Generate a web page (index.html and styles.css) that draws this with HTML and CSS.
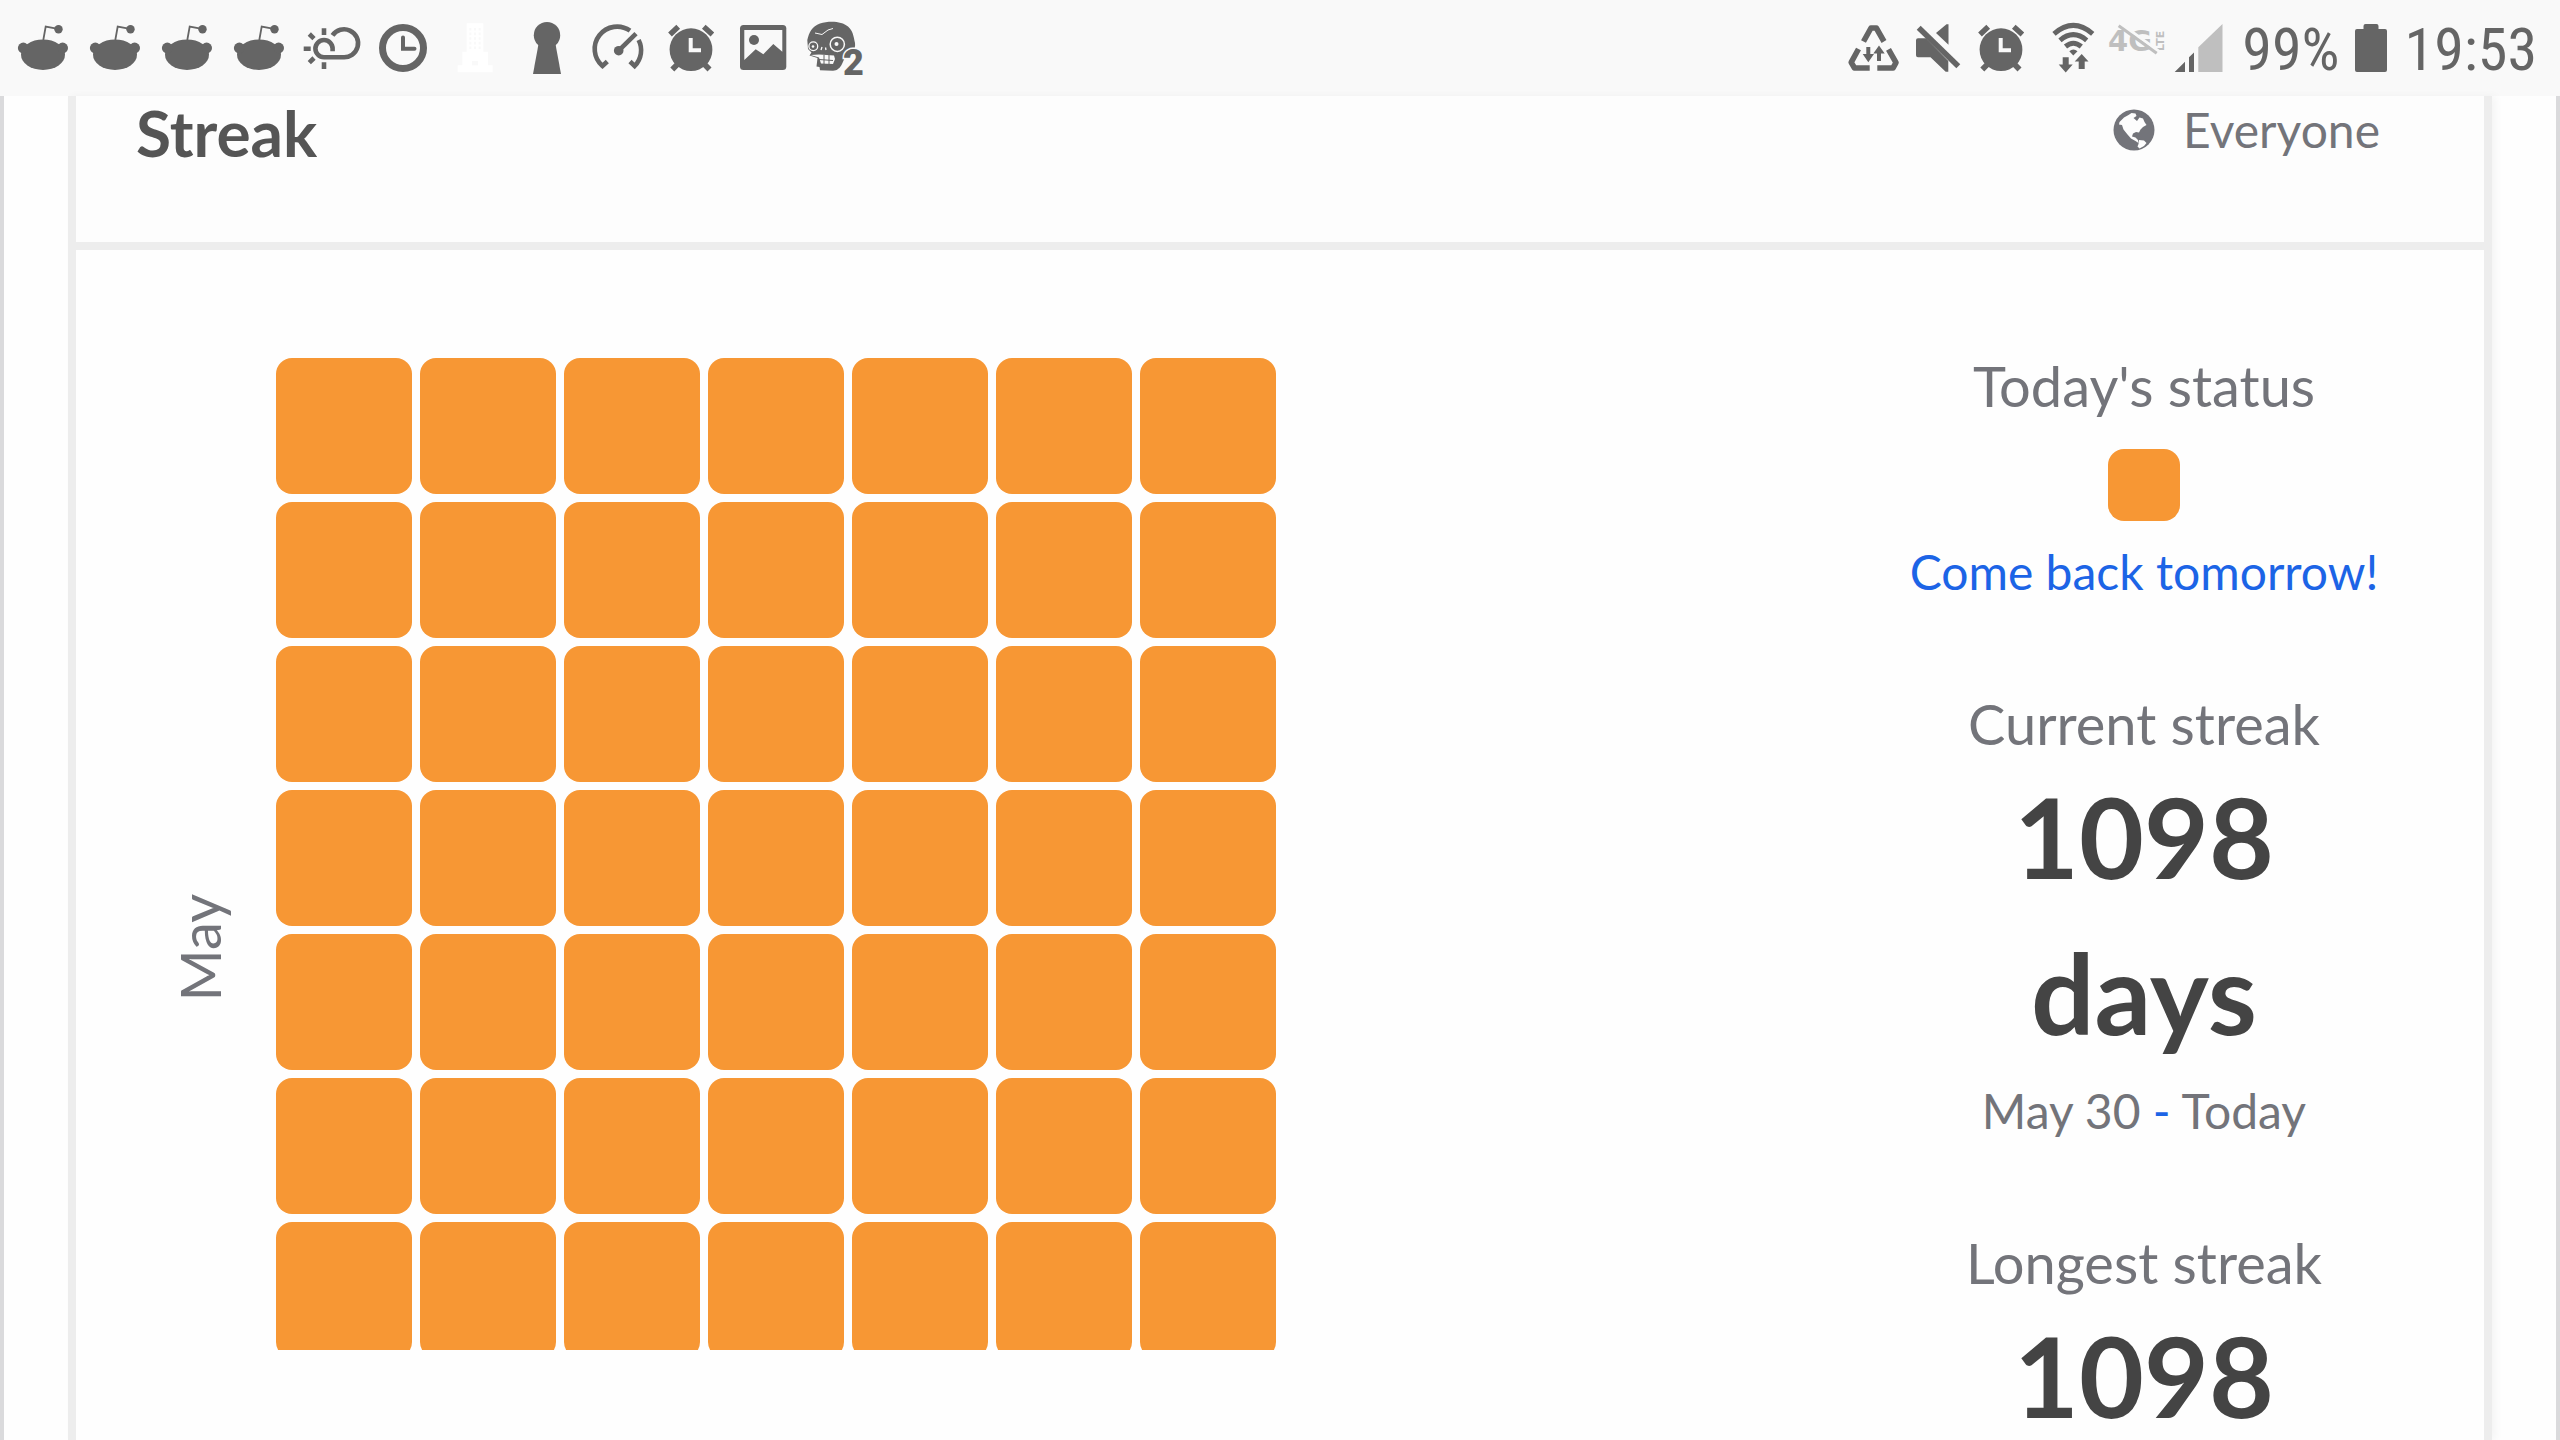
FILE: index.html
```
<!DOCTYPE html>
<html lang="en">
<head>
<meta charset="utf-8">
<meta name="viewport" content="width=device-width, initial-scale=1">
<title>Streak</title>
<link rel="stylesheet" href="styles.css">
</head>
<body>
<svg class="symbols" aria-hidden="true">
  <symbol id="reddit" viewBox="0 0 72 96">
    <ellipse cx="36" cy="54.7" rx="22" ry="15.3"/>
    <circle cx="16.3" cy="48" r="5.4"/><circle cx="55.6" cy="48" r="5.4"/>
    <path d="M36.3 40L38.7 26.6L51 28.9" fill="none" stroke="currentColor" stroke-width="1.8"/>
    <circle cx="51.5" cy="29.2" r="4.2"/>
  </symbol>
  <symbol id="alarm" viewBox="0 0 72 96">
    <circle cx="36" cy="49.7" r="21.4"/>
    <path d="M15 34.5L23.2 26.7M48.8 26.7L57.4 34.5" fill="none" stroke="currentColor" stroke-width="5.4"/>
    <path d="M17.3 69.5L24 62.8M54.5 69.5L48 62.8" fill="none" stroke="currentColor" stroke-width="5.6"/>
    <path d="M35.7 38V50.2H46" fill="none" stroke="#f9f9f9" stroke-width="4"/>
  </symbol>
</svg>

<header class="statusbar">
  <div class="notices">
    <svg class="icon"><use href="#reddit"/></svg>
    <svg class="icon"><use href="#reddit"/></svg>
    <svg class="icon"><use href="#reddit"/></svg>
    <svg class="icon"><use href="#reddit"/></svg>
    <svg class="icon" viewBox="0 0 72 96">
      <g fill="none" stroke="currentColor" stroke-width="4.6">
        <path d="M29 28.3V35M29 62.3V69M8.7 48.7H15.7M14.3 34L19 38.7M19 58L14.3 62.7"/>
        <path d="M37.5 35.4A14 14 0 1 1 47.7 57.2H29A8.6 8.6 0 1 1 37.6 48.6V51.2"/>
      </g>
    </svg>
    <svg class="icon" viewBox="0 0 72 96">
      <circle cx="36" cy="48" r="20.5" fill="none" stroke="currentColor" stroke-width="7"/>
      <path d="M36 37.5V48.8H47.5" fill="none" stroke="currentColor" stroke-width="4" stroke-linecap="round"/>
    </svg>
    <svg class="icon" viewBox="0 0 72 96">
      <path fill="#fff" d="M27.7 23.3H44.3V51.7H49V65.3H53.7V72.3H18.7V65.3H23.3V51.7H27.7Z"/>
      <path d="M31.3 28V50M36 28V50M40.7 28V50" fill="none" stroke="#f9f9f9" stroke-width="2" stroke-dasharray="2.6 2"/>
      <path d="M33 61H39V65.3H33Z" fill="#f9f9f9"/>
    </svg>
    <svg class="icon" viewBox="0 0 72 96">
      <circle cx="36" cy="35.2" r="13.2"/>
      <path d="M27.7 43H44.3L50 74H22Z"/>
    </svg>
    <svg class="icon" viewBox="0 0 72 96">
      <g fill="none" stroke="currentColor" stroke-width="4.6">
        <path d="M47 30.7A22.4 22.4 0 0 0 19.5 66L24.3 61.5"/>
        <path d="M55.6 40A22.4 22.4 0 0 1 51.7 66L47 61.5"/>
        <path d="M35.7 50.7L53 33.7"/>
      </g>
      <circle cx="35.7" cy="50.7" r="4.8"/>
    </svg>
    <svg class="icon"><use href="#alarm"/></svg>
    <svg class="icon" viewBox="0 0 72 96">
      <rect x="13" y="25" width="46.3" height="45" rx="3.5"/>
      <path fill="#f9f9f9" d="M17.3 30H55.3V51.7L46.3 44L36.3 54.3L28.7 49.3L17.3 60Z"/>
      <circle cx="27" cy="40" r="5"/>
    </svg>
    <svg class="icon" viewBox="0 0 72 96">
      <path d="M8.3 40C10 33 13 26 21 23.5C30 20.5 43 21 49 26.5C54 31 54.5 36 56 43C57 50 52 54 47 55L43 64C41 68 38 70.7 34 70.7L21 70.3L20.5 67L17.5 66.5L18.5 58L10.5 55.5L12.5 52.5L9 49Z"/>
      <circle cx="38.3" cy="44.3" r="7.1" fill="none" stroke="#f9f9f9" stroke-width="1.5"/>
      <circle cx="37.5" cy="44" r="2" fill="#f9f9f9"/>
      <circle cx="14.3" cy="46.3" r="4.4" fill="none" stroke="#f9f9f9" stroke-width="1.3"/>
      <circle cx="14" cy="46.5" r="1.3" fill="#f9f9f9"/>
      <path d="M11.5 55L20 54.5L35 55.5L36 59L34 64L22 63.5L20 57.5Z" fill="#f9f9f9"/>
      <path d="M20 59.5L34 60.5M25 55V64M30 55V64" stroke="currentColor" stroke-width="1"/>
      <path d="M16 33L23 34.5L29 30L34 28.5" fill="none" stroke="#f9f9f9" stroke-width="1"/>
      <path d="M23 47L22 50M26.5 47.5L27 50" stroke="#f9f9f9" stroke-width="1.3"/>
      <text class="zombie-number" x="44" y="75">2</text>
    </svg>
  </div>

  <div class="system">
    <svg class="icon icon-tight" viewBox="0 0 64 96">
      <g fill="none" stroke="currentColor" stroke-width="5.6" stroke-linejoin="round">
        <path d="M21.5 41.5L29 28H34.3L42 41.5"/>
        <path d="M16.5 49L9.2 62.3L12.5 68H27.7"/>
        <path d="M46.5 49.3L54 62.7L51 68H35.3"/>
      </g>
      <path d="M24.3 47H28.3V54H32L26.3 62.3L20.7 54H24.3Z"/>
      <path d="M35 61V53.5H31.3L37 45.5L42.7 53.5H39V61Z"/>
    </svg>
    <svg class="icon icon-tight" viewBox="0 0 64 96">
      <path d="M12 38.3H20L42.3 61V71.7H39.7L24.5 57.3H12Q10 57.3 10 55.3V40.3Q10 38.3 12 38.3Z"/>
      <path d="M30 33L40.5 24.3H42.5V44.7Z"/>
      <path d="M12.7 27.7L52.3 66.3" stroke="currentColor" stroke-width="5.6"/>
    </svg>
    <svg class="icon icon-tight" viewBox="0 0 64 96"><use href="#alarm" x="-5" width="72" height="96"/></svg>
    <svg class="icon" viewBox="0 0 72 96">
      <g fill="none" stroke="currentColor" stroke-width="5">
        <path d="M20 33.8Q39.3 17 58.7 33.8"/>
        <path d="M26 40.3Q39.3 29 52.7 40.3"/>
        <path d="M31.5 46.5Q39.3 40 47.3 46.5"/>
      </g>
      <path d="M35.3 51.3Q39.3 47.7 43.5 51.3L39.3 55.5Z"/>
      <path d="M28.7 57.3H34.7V64.5H38.7L31.7 72.5L24.7 64.5H28.7Z"/>
      <path d="M44.7 69V61.5H40.7L47.7 54L54.5 61.5H50.7V69Z"/>
    </svg>
    <svg class="icon icon-tight faint" viewBox="0 0 64 96">
      <text class="network" x="2" y="51">4G</text>
      <text class="network-type" transform="translate(58 51) rotate(-90)">LTE</text>
      <path d="M14.5 23.5L52.5 51" stroke="#f9f9f9" stroke-width="3"/>
      <path d="M12.7 25.7L50.7 53.3" stroke="currentColor" stroke-width="3"/>
    </svg>
    <svg class="icon icon-tight" viewBox="0 0 64 96">
      <path d="M4.7 72L15 61.7V72ZM19 57.3L24 52.5V72H19Z"/>
      <path fill="#bfbfbf" d="M28.3 47.3L52.5 24V72H28.3Z"/>
    </svg>
    <span class="reading level">99%</span>
    <svg class="battery" viewBox="0 0 32 48">
      <path d="M2 5H8.5V2Q8.5 0 10.5 0H21.5Q23.5 0 23.5 2V5H30Q32 5 32 7V46Q32 48 30 48H2Q0 48 0 46V7Q0 5 2 5Z"/>
    </svg>
    <time class="reading">19:53</time>
  </div>
</header>

<main class="page">
  <section class="card">
    <div class="card-head">
      <h1 class="card-title">Streak</h1>
      <button class="audience" type="button">
        <svg class="globe" viewBox="0 0 42 42">
          <circle cx="21" cy="21" r="20.5"/>
          <path fill="#fdfdfd" d="M6.5 13L11 8.5L15.5 6L18.5 4L22.5 4.5L23.5 7L20.5 9L24 12L26.5 8.5L30 9.5L31.5 13L33.5 16L30 18L27.5 20.5L26 23.5L23 23L20 24.5L19 27.5L22.5 28.5L25 31L25.5 34L22.5 32L18 29.5L14.5 25.5L10.5 20.5L9 16L6 15.5Z"/>
          <path fill="#fdfdfd" d="M26 31L31 31.5L33.5 34L31 37L26.5 39.5L24.5 37.5L25.5 35Z"/>
        </svg>
        Everyone
      </button>
    </div>

    <div class="card-body">
      <div class="calendar">
        <span class="month">May</span>
        <div class="days">
          <i class="day"></i><i class="day"></i><i class="day"></i><i class="day"></i><i class="day"></i><i class="day"></i><i class="day"></i>
          <i class="day"></i><i class="day"></i><i class="day"></i><i class="day"></i><i class="day"></i><i class="day"></i><i class="day"></i>
          <i class="day"></i><i class="day"></i><i class="day"></i><i class="day"></i><i class="day"></i><i class="day"></i><i class="day"></i>
          <i class="day"></i><i class="day"></i><i class="day"></i><i class="day"></i><i class="day"></i><i class="day"></i><i class="day"></i>
          <i class="day"></i><i class="day"></i><i class="day"></i><i class="day"></i><i class="day"></i><i class="day"></i><i class="day"></i>
          <i class="day"></i><i class="day"></i><i class="day"></i><i class="day"></i><i class="day"></i><i class="day"></i><i class="day"></i>
          <i class="day"></i><i class="day"></i><i class="day"></i><i class="day"></i><i class="day"></i><i class="day"></i><i class="day"></i>
        </div>
      </div>

      <aside class="summary">
        <section>
          <h2 class="label">Today's status</h2>
          <i class="today"></i>
          <p class="note accent">Come back tomorrow!</p>
        </section>
        <section>
          <h2 class="label">Current streak</h2>
          <p class="count">1098 days</p>
          <p class="note range">May 30 <span class="accent">-</span> Today</p>
        </section>
        <section>
          <h2 class="label">Longest streak</h2>
          <p class="count">1098</p>
        </section>
      </aside>
    </div>
  </section>
</main>
</body>
</html>
```
FILE: styles.css
```
* {
  box-sizing: border-box;
}

body {
  display: flex;
  flex-direction: column;
  height: 100vh;
  margin: 0;
  overflow: hidden;
  background: #fefefe;
  color: #73747a;
  font-family: Lato, "Open Sans", sans-serif;
}

h1, h2, p {
  margin: 0;
}

.symbols {
  position: absolute;
  width: 0;
  height: 0;
}

/* Phone status bar */

.statusbar {
  display: flex;
  flex: none;
  justify-content: space-between;
  height: 96px;
  padding: 0 23px 0 7px;
  background: #f9f9f9;
  color: #656565;
}

.statusbar svg {
  flex: none;
  fill: currentColor;
}

.notices,
.system {
  display: flex;
  align-items: center;
}

.icon {
  width: 72px;
  height: 96px;
}

.icon-tight {
  width: 64px;
}

.faint {
  color: #bfbfbf;
}

.battery {
  width: 32px;
  height: 48px;
  margin: 0 18px 0 15px;
}

.reading {
  padding-top: 4px;
  font: 60px/72px "Roboto Condensed", "Liberation Sans Narrow", Roboto, sans-serif;
}

.level {
  margin-left: 8px;
}

.zombie-number {
  font: 900 36px Roboto, sans-serif;
  stroke: #f9f9f9;
  stroke-width: 3px;
  paint-order: stroke;
}

.network {
  font: bold 29px "DejaVu Sans", sans-serif;
}

.network-type {
  font: bold 11px "DejaVu Sans", sans-serif;
}

/* Page and card */

.page {
  display: flex;
  flex: 1;
  min-height: 0;
  padding: 0 64px;
  border: solid #dadadc;
  border-width: 0 4px;
}

.card {
  display: flex;
  flex: 1;
  flex-direction: column;
  border: solid #ededed;
  border-width: 0 8px;
  box-shadow: 4px 0 8px rgba(0, 0, 0, 0.04);
}

.card-head {
  display: flex;
  flex: none;
  justify-content: space-between;
  align-items: flex-start;
  height: 154px;
  padding: 0 104px 0 60px;
  border-bottom: 8px solid #ededed;
  background: #fdfdfd;
}

.card-title {
  color: #555;
  font-size: 64px;
  line-height: 74px;
}

.audience {
  display: flex;
  align-items: center;
  gap: 28px;
  padding: 0;
  border: 0;
  background: none;
  color: inherit;
  font: inherit;
  font-size: 48px;
  line-height: 68px;
}

.globe {
  width: 42px;
  height: 42px;
  fill: currentColor;
}

.card-body {
  display: flex;
  flex: 1;
  justify-content: space-between;
  min-height: 0;
  padding-right: 100px;
}

/* Streak calendar */

.calendar {
  display: flex;
  align-items: flex-start;
  height: 1100px;
  padding: 108px 0 0 88px;
  overflow: hidden;
}

.month {
  width: 112px;
  margin-top: 536px;
  font-size: 56px;
  line-height: 72px;
  writing-mode: vertical-rl;
  transform: rotate(180deg);
}

.days {
  display: grid;
  grid-template-columns: repeat(7, 136px);
  gap: 8px;
}

.day,
.today {
  display: block;
  border-radius: 16px;
  background: #f79734;
}

.day {
  height: 136px;
}

/* Streak summary */

.summary {
  display: flex;
  flex-direction: column;
  gap: 76px;
  width: 480px;
  padding-top: 98px;
  text-align: center;
}

.label {
  font-size: 56px;
  font-weight: 400;
  line-height: 76px;
}

.today {
  width: 72px;
  height: 72px;
  margin: 25px auto 13px;
}

.note {
  font-size: 48px;
  line-height: 76px;
}

.accent {
  color: #1c64e6;
}

.count {
  margin-top: -4px;
  color: #444;
  font-size: 112px;
  font-weight: 700;
  line-height: 156px;
}

.range {
  padding-top: 3px;
}
```
